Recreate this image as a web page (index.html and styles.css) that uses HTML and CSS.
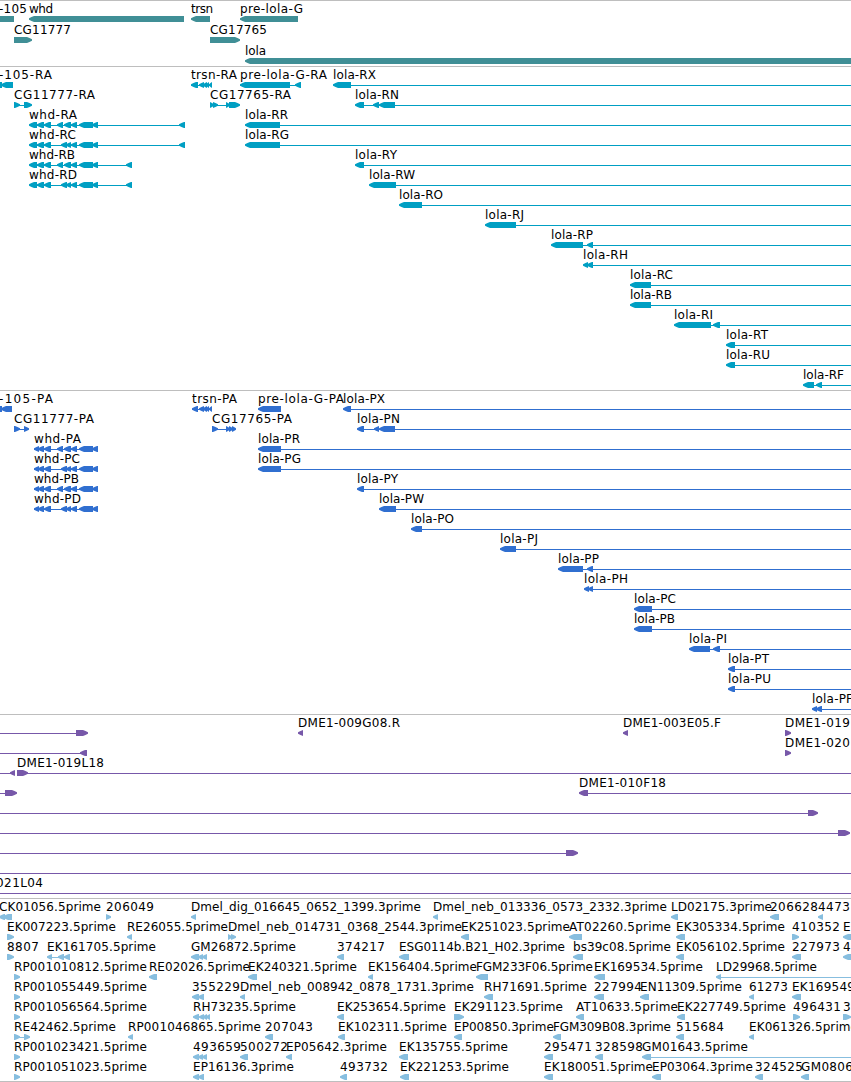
FILE: index.html
```
<!DOCTYPE html>
<html lang="en">
<head>
<meta charset="utf-8">
<title>Genome region</title>
<link rel="stylesheet" href="styles.css">
</head>
<body>
<main class="browser" id="browser"></main>
<script src="tracks.js"></script>
</body>
</html>
```
FILE: styles.css
```
body {
  margin: 0;
  background: #fff;
}

.browser {
  display: flex;
  flex-direction: column;
  width: 851px;
  height: 1082px;
  overflow: hidden;
}

.track {
  box-sizing: border-box;
  flex: none;
  border-top: 1px solid #bebebe;
  overflow: hidden;
}

.track:last-child {
  border-bottom: 1px solid #bebebe;
}

.features {
  display: block;
}

.label {
  font-family: "DejaVu Sans", sans-serif;
  font-size: 12px;
  fill: #000;
}

.gene { color: #408f96; }
.transcript { color: #009fc3; }
.protein { color: #306fd0; }
.clone { color: #7758a9; }
.est { color: #87bedf; }

.exon,
.intron {
  fill: currentColor;
}

.intron {
  shape-rendering: crispEdges;
}
```
FILE: tracks.js
```
// Row syntax: items separated by "|".
//   "- a b" intron line, "< a b" / "> a b" stranded exon, "T a b text" label.
const whdA = '< 57 63|< 64 71|< 71 77|< 79 93|< 92 98';
const whdC = '< 61 67|< 66 71|< 71 77|< 79 93|< 92 98';
const whdR = '< 29 37|< 37 44|< 44 51|';
const whdP = '- 34 98|< 34 39|< 38 44|< 44 51|';
const tracks = [
  { kind: 'gene', height: 66, pitch: 21, rows: [
    'T -1 27 -105|> -20 14 flat|T 29 53 whd|< 29 184|T 191 213 trsn|< 191 210|T 240 303 pre-lola-G|< 240 298',
    'T 14 71 CG11777|> 14 32|T 210 267 CG17765|> 210 240',
    'T 245 266 lola|< 245 870'
  ] },
  { kind: 'transcript', height: 324, pitch: 20, rows: [
    'T -1 52 -105-RA|< -6 2|< 1 13|T 191 237 trsn-RA|- 191 212|< 191 198|< 199 204|< 203 207|< 206 209|< 209 212|T 240 327 pre-lola-G-RA|- 240 300|< 240 290|< 295 301|T 333 376 lola-RX|- 340 851|< 333 351',
    'T 14 95 CG11777-RA|- 14 30|> 14 20|> 24 32|T 210 291 CG17765-RA|- 210 235|> 210 214|> 213 218|> 226 230|> 229 240|T 355 399 lola-RN|- 360 851|< 355 364|< 373 379|< 379 395',
    `T 29 77 whd-RA|- 35 183|${whdR}${whdA}|< 179 185|T 245 288 lola-RR|- 250 851|< 245 280`,
    `T 29 76 whd-RC|- 35 183|${whdR}${whdC}|< 179 185|T 245 289 lola-RG|- 250 851|< 245 280`,
    `T 29 75 whd-RB|- 35 130|${whdR}${whdA}|< 126 132|T 355 397 lola-RY|- 360 851|< 355 364`,
    `T 29 77 whd-RD|- 35 130|${whdR}${whdC}|< 126 132|T 369 415 lola-RW|- 375 851|< 369 396`,
    'T 399 443 lola-RO|- 405 851|< 399 422',
    'T 485 524 lola-RJ|- 490 851|< 485 516',
    'T 551 593 lola-RP|- 560 851|< 551 583|< 587 593',
    'T 583 628 lola-RH|- 588 851|< 583 588|< 587 593',
    'T 630 673 lola-RC|- 640 851|< 630 651',
    'T 630 672 lola-RB|- 640 851|< 630 651',
    'T 674 713 lola-RI|- 680 851|< 674 711|< 713 720',
    'T 726 768 lola-RT|- 730 851|< 726 735',
    'T 726 770 lola-RU|- 730 851|< 726 735',
    'T 803 844 lola-RF|- 806 851|< 803 814|< 816 822'
  ] },
  { kind: 'protein', height: 324, pitch: 20, rows: [
    'T -1 53 -105-PA|< -6 2|< 1 12|T 192 237 trsn-PA|- 192 212|< 192 198|< 199 204|< 203 207|< 206 209|< 209 212|T 258 344 pre-lola-G-PA|< 258 281|T 343 385 lola-PX|- 347 851|< 343 351',
    'T 14 94 CG11777-PA|- 14 28|> 14 20|> 24 29|T 212 292 CG17765-PA|- 212 234|> 212 218|> 226 230|> 229 233|> 232 236|T 357 400 lola-PN|- 360 851|< 357 364|< 374 379|< 379 395',
    `T 34 81 whd-PA|${whdP}${whdA}|T 258 300 lola-PR|- 265 851|< 258 281`,
    `T 34 80 whd-PC|${whdP}${whdC}|T 258 301 lola-PG|- 265 851|< 258 281`,
    `T 34 79 whd-PB|${whdP}${whdA}|T 357 398 lola-PY|- 360 851|< 357 364`,
    `T 34 81 whd-PD|${whdP}${whdC}|T 379 424 lola-PW|- 385 851|< 379 396`,
    'T 411 454 lola-PO|- 415 851|< 411 422',
    'T 500 538 lola-PJ|- 505 851|< 500 516',
    'T 558 599 lola-PP|- 565 851|< 558 583|< 587 593',
    'T 584 628 lola-PH|- 588 851|< 584 589|< 588 593',
    'T 634 676 lola-PC|- 640 851|< 634 652',
    'T 634 675 lola-PB|- 640 851|< 634 652',
    'T 689 727 lola-PI|- 695 851|< 689 710|< 713 720',
    'T 728 769 lola-PT|- 732 851|< 728 735',
    'T 728 771 lola-PU|- 732 851|< 728 735',
    'T 812 853 lola-PF|- 815 851|< 812 817|< 816 822'
  ] },
  { kind: 'clone', height: 184, pitch: 20, rows: [
    '- 0 80|> 76 88|T 298 400 DME1-009G08.R|< 298 303|T 623 721 DME1-003E05.F|< 623 628|T 785 850 DME1-019|> 785 791',
    '- 0 84|< 80 87|T 785 850 DME1-020|> 785 791',
    '- 0 13|< 10 15|T 17 104 DME1-019L18|- 20 851|> 17 28',
    '- 0 8|> 5 17|T 579 666 DME1-010F18|- 583 851|< 579 588',
    '- 0 810|> 808 818',
    '- 0 840|> 838 850',
    '- 0 570|> 566 578',
    '- 0 851',
    'T -4 43 021L04|- 0 851'
  ] },
  { kind: 'est', height: 184, pitch: 20, rows: [
    'T -1 101 CK01056.5prime|< -1 5|< 3 12|T 106 154 206049|> 106 111|T 191 421 Dmel_dig_016645_0652_1399.3prime|< 191 196|T 433 667 Dmel_neb_013336_0573_2332.3prime|< 433 438|T 671 772 LD02175.3prime|< 671 678|T 770 818 206628|< 770 779|T 818 850 4473|< 818 823',
    'T 7 116 EK007223.5prime|> 7 14|T 127 228 RE26055.5prime|< 127 132|T 228 462 Dmel_neb_014731_0368_2544.3prime|> 228 232|> 231 236|T 461 570 EK251023.5prime|< 461 469|T 569 671 AT02260.5prime|< 569 582|T 676 785 EK305334.5prime|< 676 685|T 792 840 410352|> 792 799|T 843 851 E|< 843 853',
    'T 7 39 8807|> 7 14|T 47 156 EK161705.5prime|- 48 68|< 47 52|< 58 64|< 64 70|T 191 296 GM26872.5prime|< 191 199|< 198 203|< 202 207|T 337 385 374217|< 337 344|T 399 565 ESG0114b.B21_H02.3prime|< 399 409|T 573 671 bs39c08.5prime|< 573 583|T 676 785 EK056102.5prime|< 676 684|T 792 840 227973|< 792 801|T 843 851 4|< 843 853',
    'T 14 147 RP001010812.5prime|> 14 20|T 149 250 RE02026.5prime|< 149 157|T 248 357 EK240321.5prime|< 248 257|T 368 477 EK156404.5prime|< 368 373|T 476 593 FGM233F06.5prime|< 476 488|T 594 703 EK169534.5prime|< 594 605|T 716 817 LD29968.5prime|- 719 851|< 716 721',
    'T 14 147 RP001055449.5prime|> 14 20|T 192 240 355229|< 192 199|< 198 204|T 240 474 Dmel_neb_008942_0878_1731.3prime|< 240 245|T 484 587 RH71691.5prime|< 484 493|T 594 642 227994|< 594 604|T 640 742 EN11309.5prime|< 640 649|T 749 788 61273|< 749 754|T 792 855 EK169549|< 792 801',
    'T 14 147 RP001056564.5prime|> 14 20|T 193 296 RH73235.5prime|< 193 199|< 199 204|< 203 207|< 206 210|T 337 446 EK253654.5prime|< 337 344|T 454 563 EK291123.5prime|> 454 464|T 576 678 AT10633.5prime|< 576 584|T 677 786 EK227749.5prime|< 677 685|T 793 841 496431|> 793 800|T 843 851 3|> 843 851',
    'T 14 116 RE42462.5prime|- 14 28|> 14 20|> 24 30|T 128 261 RP001046865.5prime|< 128 133|T 265 313 207043|< 265 273|T 338 447 EK102311.5prime|< 338 345|T 454 554 EP00850.3prime|< 454 462|T 553 671 FGM309B08.3prime|< 553 561|T 676 724 515684|< 676 684|T 749 858 EK061326.5prime|< 749 754',
    'T 14 147 RP001023421.5prime|> 14 20|T 193 241 493659|< 193 199|< 198 203|< 202 207|T 240 288 500272|< 240 248|T 286 387 EP05642.3prime|< 286 292|T 399 508 EK135755.5prime|< 399 408|T 544 592 295471|< 544 553|T 595 643 328598|< 595 603|T 642 748 GM01643.5prime|- 648 851|< 642 651',
    'T 14 147 RP001051023.5prime|> 14 20|T 193 294 EP16136.3prime|< 193 199|< 198 204|T 340 388 493732|< 340 347|T 400 509 EK221253.5prime|< 400 409|T 544 653 EK180051.5prime|< 544 553|T 652 753 EP03064.3prime|< 652 661|T 755 803 324525|< 755 763|T 801 853 GM0806|< 801 809'
  ] }
];

const NS = 'http://www.w3.org/2000/svg';

function add(parent, tag, attrs) {
  const el = document.createElementNS(NS, tag);
  for (const name in attrs) el.setAttribute(name, attrs[name]);
  parent.appendChild(el);
  return el;
}

// Exon box with a slightly rounded arrow head on its leading side.
function exonPoints(a, b, top, right) {
  const head = Math.min(5, b - a);
  const tip = right ? b : a;
  const back = right ? a : b;
  const neck = right ? b - head : a + head;
  const mid = (tip + neck) / 2;
  return [
    [tip, top + 2.2], [mid, top + 0.9], [neck, top], [back, top],
    [back, top + 6], [neck, top + 6], [mid, top + 5.1], [tip, top + 3.8]
  ].join(' ');
}

for (const track of tracks) {
  const section = document.createElement('section');
  section.className = 'track ' + track.kind;
  section.style.height = track.height + 'px';
  const svg = add(section, 'svg', { class: 'features', width: 851, height: track.height - 1 });
  track.rows.forEach((row, i) => {
    const y = i * track.pitch;
    for (const item of row.split('|')) {
      const [type, from, to, extra] = item.split(' ');
      const a = +from, b = +to;
      if (type === '-') {
        add(svg, 'rect', { class: 'intron', x: a, y: y + 18, width: b - a, height: 1 });
      } else if (type === 'T') {
        add(svg, 'text', { class: 'label', x: a, y: y + 12, textLength: b - a }).textContent = extra;
      } else if (extra === 'flat') {
        add(svg, 'rect', { class: 'exon', x: a, y: y + 15, width: b - a, height: 6 });
      } else {
        add(svg, 'polygon', { class: 'exon', points: exonPoints(a, b, y + 15, type === '>') });
      }
    }
  });
  document.getElementById('browser').appendChild(section);
}
```
